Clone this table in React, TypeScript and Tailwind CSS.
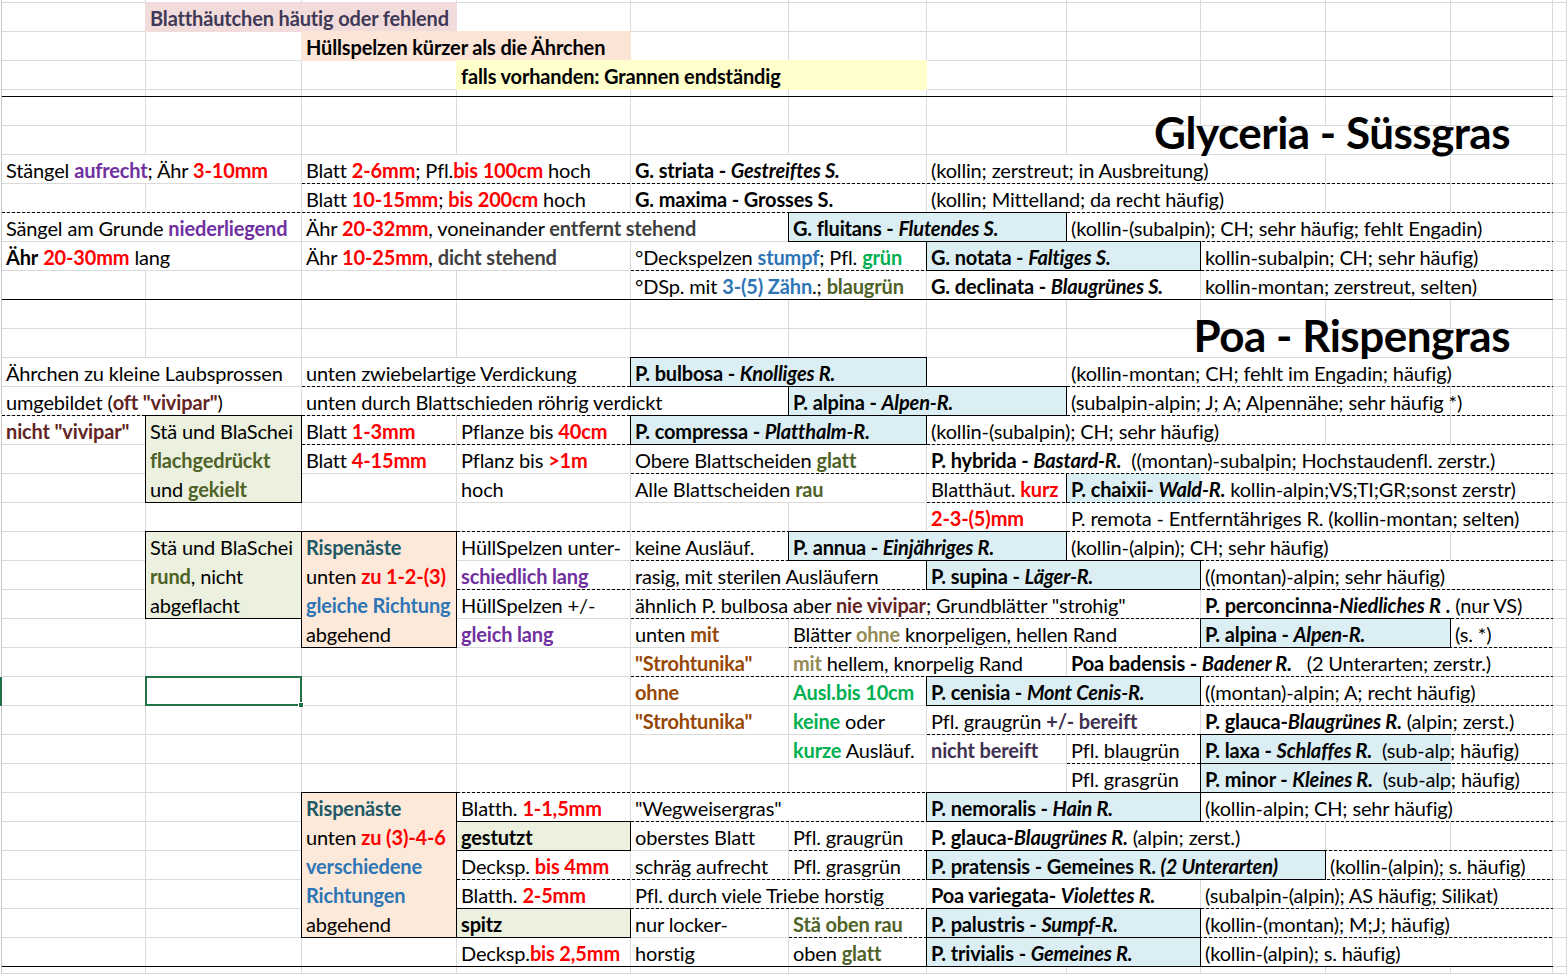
import React from "react";

type Fill = { r: number; c: number; cs?: number; rs?: number; cls: string };
type Txt = { r: number; c: number; cs?: number; t: React.ReactNode };
type Line = [number, number, number];

// column grid lines: A..K, column 1 is the 2px window edge
const A = 2, B = 3, C = 4, D = 5, E = 6, F = 7, G = 8, H = 9, I = 10, J = 11, K = 12, END = 13;

// sheet row -> grid row (a thin spacer row sits under row 2)
const gr = (r: number) => (r < 3 ? r + 2 : r + 3);
const at = (r: number, c: number, cs = 1, rs = 1) => ({
  gridRow: `${gr(r)} / span ${rs}`,
  gridColumn: `${c} / span ${cs}`,
});

const red = (s: string) => <b className="text-[#ff0000]">{s}</b>;
const pur = (s: string) => <b className="text-[#7030a0]">{s}</b>;
const mar = (s: string) => <b className="text-[#632523]">{s}</b>;
const blu = (s: string) => <b className="text-[#2e75b6]">{s}</b>;
const grn = (s: string) => <b className="text-[#00b050]">{s}</b>;
const olv = (s: string) => <b className="text-[#4f6228]">{s}</b>;
const brn = (s: string) => <b className="text-[#974706]">{s}</b>;
const tan = (s: string) => <b className="text-[#948a54]">{s}</b>;
const dpu = (s: string) => <b className="text-[#403151]">{s}</b>;
const gry = (s: string) => <b className="text-[#404040]">{s}</b>;
const tea = (s: string) => <b className="text-[#215967]">{s}</b>;
const sp = (a: string, b: string) => (
  <b>
    {a}
    <i>{b}</i>
  </b>
);

const BLUE = "bg-[#daeef3] border border-black -ml-px -mt-px";
const GREEN = "bg-[#ebf1de] border border-black -ml-px -mt-px";
const PEACH = "bg-[#fde9d9] border border-black -ml-px -mt-px";

const fills: Fill[] = [
  { r: 0, c: B, cs: 2, cls: "bg-[#f2dcdb] -ml-px -mt-px" },
  { r: 1, c: C, cs: 2, cls: "bg-[#fce4d6] -ml-px -mt-px" },
  { r: 2, c: D, cs: 3, cls: "bg-[#ffffcc] -ml-px -mt-px" },
  { r: 7, c: F, cs: 2, cls: BLUE },
  { r: 8, c: G, cs: 2, cls: BLUE },
  { r: 12, c: E, cs: 2, cls: BLUE },
  { r: 13, c: F, cs: 2, cls: BLUE },
  { r: 14, c: B, rs: 3, cls: GREEN },
  { r: 14, c: E, cs: 2, cls: BLUE },
  { r: 16, c: H, cls: "bg-[#daeef3] border-l border-black -ml-px" },
  { r: 18, c: B, rs: 3, cls: GREEN },
  { r: 18, c: C, rs: 4, cls: PEACH },
  { r: 18, c: F, cs: 2, cls: BLUE },
  { r: 19, c: G, cs: 2, cls: BLUE },
  { r: 21, c: I, cs: 2, cls: BLUE },
  { r: 23, c: G, cs: 2, cls: BLUE },
  { r: 25, c: I, cs: 2, cls: "bg-[#daeef3] border-t border-l border-black -mt-px -ml-px" },
  { r: 26, c: I, cs: 2, cls: "bg-[#daeef3] border-t border-b border-l border-black -mt-px -ml-px" },
  { r: 27, c: C, rs: 5, cls: PEACH },
  { r: 27, c: G, cs: 2, cls: BLUE },
  { r: 28, c: D, cls: GREEN },
  { r: 29, c: G, cs: 3, cls: BLUE },
  { r: 31, c: D, cls: GREEN },
  { r: 31, c: G, cs: 2, cls: BLUE },
  { r: 32, c: G, cs: 2, cls: BLUE },
];

// white areas where text runs over the next cells (hides vertical grid lines)
const masks: Txt[] = [
  { r: 4, c: H, cs: 4, t: null },
  { r: 11, c: H, cs: 4, t: null },
  { r: 16, c: I, cs: 3, t: null },
  { r: 25, c: K, cs: 1, t: null },
  { r: 26, c: K, cs: 1, t: null },
];

const texts: Txt[] = [
  { r: 0, c: B, t: <b className="text-[#3f3856]">Blatthäutchen häutig oder fehlend</b> },
  { r: 1, c: C, t: <b>Hüllspelzen kürzer als die Ährchen</b> },
  { r: 2, c: D, t: <b>falls vorhanden: Grannen endständig</b> },

  { r: 5, c: A, cs: 2, t: <>Stängel {pur("aufrecht")}; Ähr {red("3-10mm")}</> },
  { r: 5, c: C, cs: 2, t: <>Blatt {red("2-6mm")}; Pfl.{red("bis 100cm")} hoch</> },
  { r: 5, c: E, cs: 2, t: sp("G. striata - ", "Gestreiftes S.") },
  { r: 5, c: G, cs: 3, t: "(kollin; zerstreut; in Ausbreitung)" },

  { r: 6, c: C, cs: 2, t: <>Blatt {red("10-15mm")}; {red("bis 200cm")} hoch</> },
  { r: 6, c: E, cs: 2, t: <b>G. maxima - Grosses S.</b> },
  { r: 6, c: G, cs: 3, t: "(kollin; Mittelland; da recht häufig)" },

  { r: 7, c: A, cs: 2, t: <>Sängel am Grunde {pur("niederliegend")}</> },
  { r: 7, c: C, cs: 3, t: <>Ähr {red("20-32mm")}, voneinander {gry("entfernt stehend")}</> },
  { r: 7, c: F, t: sp("G. fluitans - ", "Flutendes S.") },
  { r: 7, c: H, cs: 4, t: "(kollin-(subalpin); CH; sehr häufig; fehlt Engadin)" },

  { r: 8, c: A, cs: 2, t: <><b>Ähr</b> {red("20-30mm")} lang</> },
  { r: 8, c: C, cs: 2, t: <>Ähr {red("10-25mm")}, {gry("dicht stehend")}</> },
  { r: 8, c: E, cs: 2, t: <>°Deckspelzen {blu("stumpf")}; Pfl. {grn("grün")}</> },
  { r: 8, c: G, t: sp("G. notata - ", "Faltiges S.") },
  { r: 8, c: I, cs: 3, t: "kollin-subalpin; CH; sehr häufig)" },

  { r: 9, c: E, cs: 2, t: <>°DSp. mit {blu("3-(5) Zähn")}.; {olv("blaugrün")}</> },
  { r: 9, c: G, cs: 2, t: sp("G. declinata - ", "Blaugrünes S.") },
  { r: 9, c: I, cs: 3, t: "kollin-montan; zerstreut, selten)" },

  { r: 12, c: A, cs: 2, t: "Ährchen zu kleine Laubsprossen" },
  { r: 12, c: C, cs: 2, t: "unten zwiebelartige Verdickung" },
  { r: 12, c: E, t: sp("P. bulbosa - ", "Knolliges R.") },
  { r: 12, c: H, cs: 4, t: "(kollin-montan; CH; fehlt im Engadin; häufig)" },

  { r: 13, c: A, cs: 2, t: <>umgebildet ({mar('oft "vivipar"')})</> },
  { r: 13, c: C, cs: 3, t: "unten durch Blattschieden röhrig verdickt" },
  { r: 13, c: F, t: sp("P. alpina - ", "Alpen-R.") },
  { r: 13, c: H, cs: 3, t: "(subalpin-alpin; J; A; Alpennähe; sehr häufig *)" },

  { r: 14, c: A, t: mar('nicht "vivipar"') },
  { r: 14, c: B, t: "Stä und BlaSchei" },
  { r: 14, c: C, t: <>Blatt {red("1-3mm")}</> },
  { r: 14, c: D, t: <>Pflanze bis {red("40cm")}</> },
  { r: 14, c: E, t: sp("P. compressa - ", "Platthalm-R.") },
  { r: 14, c: G, cs: 3, t: "(kollin-(subalpin); CH; sehr häufig)" },

  { r: 15, c: B, t: olv("flachgedrückt") },
  { r: 15, c: C, t: <>Blatt {red("4-15mm")}</> },
  { r: 15, c: D, t: <>Pflanz bis {red(">1m")}</> },
  { r: 15, c: E, cs: 2, t: <>Obere Blattscheiden {olv("glatt")}</> },
  { r: 15, c: G, cs: 5, t: <>{sp("P. hybrida - ", "Bastard-R.")}{"  ((montan)-subalpin; Hochstaudenfl. zerstr.)"}</> },

  { r: 16, c: B, t: <>und {olv("gekielt")}</> },
  { r: 16, c: D, t: "hoch" },
  { r: 16, c: E, cs: 2, t: <>Alle Blattscheiden {olv("rau")}</> },
  { r: 16, c: G, t: <>Blatthäut. {red("kurz")}</> },
  { r: 16, c: H, t: <>{sp("P. chaixii- ", "Wald-R.")} kollin-alpin;VS;TI;GR;sonst zerstr)</> },

  { r: 17, c: G, t: red("2-3-(5)mm") },
  { r: 17, c: H, cs: 4, t: "P. remota - Entferntähriges R. (kollin-montan; selten)" },

  { r: 18, c: B, t: "Stä und BlaSchei" },
  { r: 18, c: C, t: tea("Rispenäste") },
  { r: 18, c: D, t: "HüllSpelzen unter-" },
  { r: 18, c: E, t: "keine Ausläuf." },
  { r: 18, c: F, t: sp("P. annua - ", "Einjähriges R.") },
  { r: 18, c: H, cs: 3, t: "(kollin-(alpin); CH; sehr häufig)" },

  { r: 19, c: B, t: <>{olv("rund")}, nicht</> },
  { r: 19, c: C, t: <>unten {red("zu 1-2-(3)")}</> },
  { r: 19, c: D, t: pur("schiedlich lang") },
  { r: 19, c: E, cs: 2, t: "rasig, mit sterilen Ausläufern" },
  { r: 19, c: G, t: sp("P. supina - ", "Läger-R.") },
  { r: 19, c: I, cs: 3, t: "((montan)-alpin; sehr häufig)" },

  { r: 20, c: B, t: "abgeflacht" },
  { r: 20, c: C, t: blu("gleiche Richtung") },
  { r: 20, c: D, t: "HüllSpelzen +/-" },
  { r: 20, c: E, cs: 4, t: <>ähnlich P. bulbosa aber {mar("nie vivipar")}; Grundblätter "strohig"</> },
  { r: 20, c: I, cs: 3, t: <><b>P. perconcinna-<i>Niedliches R</i> .</b> (nur VS)</> },

  { r: 21, c: C, t: "abgehend" },
  { r: 21, c: D, t: pur("gleich lang") },
  { r: 21, c: E, t: <>unten {brn("mit")}</> },
  { r: 21, c: F, cs: 3, t: <>Blätter {tan("ohne")} knorpeligen, hellen Rand</> },
  { r: 21, c: I, t: sp("P. alpina - ", "Alpen-R.") },
  { r: 21, c: K, t: "(s. *)" },

  { r: 22, c: E, t: brn('"Strohtunika"') },
  { r: 22, c: F, cs: 2, t: <>{tan("mit")} hellem, knorpelig Rand</> },
  { r: 22, c: H, cs: 4, t: <>{sp("Poa badensis - ", "Badener R.")}{"   (2 Unterarten; zerstr.)"}</> },

  { r: 23, c: E, t: brn("ohne") },
  { r: 23, c: F, t: grn("Ausl.bis 10cm") },
  { r: 23, c: G, t: sp("P. cenisia - ", "Mont Cenis-R.") },
  { r: 23, c: I, cs: 3, t: "((montan)-alpin; A; recht häufig)" },

  { r: 24, c: E, t: brn('"Strohtunika"') },
  { r: 24, c: F, t: <>{grn("keine")} oder</> },
  { r: 24, c: G, cs: 2, t: <>Pfl. graugrün {dpu("+/- bereift")}</> },
  { r: 24, c: I, cs: 3, t: <>{sp("P. glauca-", "Blaugrünes R.")} (alpin; zerst.)</> },

  { r: 25, c: F, t: <>{grn("kurze")} Ausläuf.</> },
  { r: 25, c: G, t: dpu("nicht bereift") },
  { r: 25, c: H, t: "Pfl. blaugrün" },
  { r: 25, c: I, t: <>{sp("P. laxa - ", "Schlaffes R.")}{"  (sub-alp; häufig)"}</> },

  { r: 26, c: H, t: "Pfl. grasgrün" },
  { r: 26, c: I, t: <>{sp("P. minor - ", "Kleines R.")}{"  (sub-alp; häufig)"}</> },

  { r: 27, c: C, t: tea("Rispenäste") },
  { r: 27, c: D, t: <>Blatth. {red("1-1,5mm")}</> },
  { r: 27, c: E, cs: 2, t: '"Wegweisergras"' },
  { r: 27, c: G, t: sp("P. nemoralis - ", "Hain R.") },
  { r: 27, c: I, cs: 3, t: "(kollin-alpin; CH; sehr häufig)" },

  { r: 28, c: C, t: <>unten {red("zu (3)-4-6")}</> },
  { r: 28, c: D, t: <b>gestutzt</b> },
  { r: 28, c: E, t: "oberstes Blatt" },
  { r: 28, c: F, t: "Pfl. graugrün" },
  { r: 28, c: G, cs: 3, t: <>{sp("P. glauca-", "Blaugrünes R.")} (alpin; zerst.)</> },

  { r: 29, c: C, t: blu("verschiedene") },
  { r: 29, c: D, t: <>Decksp. {red("bis 4mm")}</> },
  { r: 29, c: E, t: "schräg aufrecht" },
  { r: 29, c: F, t: "Pfl. grasgrün" },
  { r: 29, c: G, t: <b>P. pratensis - Gemeines R. <i>(2 Unterarten)</i></b> },
  { r: 29, c: J, cs: 2, t: "(kollin-(alpin); s. häufig)" },

  { r: 30, c: C, t: blu("Richtungen") },
  { r: 30, c: D, t: <>Blatth. {red("2-5mm")}</> },
  { r: 30, c: E, cs: 2, t: "Pfl. durch viele Triebe horstig" },
  { r: 30, c: G, cs: 2, t: sp("Poa variegata- ", "Violettes R.") },
  { r: 30, c: I, cs: 3, t: "(subalpin-(alpin); AS häufig; Silikat)" },

  { r: 31, c: C, t: "abgehend" },
  { r: 31, c: D, t: <b>spitz</b> },
  { r: 31, c: E, t: "nur locker-" },
  { r: 31, c: F, t: olv("Stä oben rau") },
  { r: 31, c: G, t: sp("P. palustris - ", "Sumpf-R.") },
  { r: 31, c: I, cs: 3, t: "(kollin-(montan); M;J; häufig)" },

  { r: 32, c: D, t: <>Decksp.{red("bis 2,5mm")}</> },
  { r: 32, c: E, t: "horstig" },
  { r: 32, c: F, t: <>oben {olv("glatt")}</> },
  { r: 32, c: G, t: sp("P. trivialis - ", "Gemeines R.") },
  { r: 32, c: I, cs: 3, t: "(kollin-(alpin); s. häufig)" },
];

// dashed hair borders under a row: [row, from col, to col (exclusive)]
const dashed: Line[] = [
  [5, C, END], [6, A, END], [7, H, END], [8, E, END],
  [12, C, END], [13, A, END], [14, C, END], [15, E, END], [16, G, END],
  [17, D, END], [18, E, END], [19, D, END], [20, E, END], [21, F, END],
  [22, E, END], [23, I, END], [24, G, END], [25, H, END], [26, D, END],
  [27, E, END], [28, F, END], [29, D, END], [30, E, END], [31, F, END],
];
const solid: Line[] = [[9, A, END], [32, A, END]];

const GridBackground = () => (
  <div className="[grid-area:1/1] grid grid-cols-[2px_144px_156px_155px_174px_158px_138px_140px_134px_125px_125px_102px_14px] grid-rows-[3px_repeat(3,29px)_7px_repeat(30,29px)_7px]">
    {Array.from({ length: 36 }).map((_, ri) => (
      <React.Fragment key={ri}>
        <div className="border-r border-[#c6c6c6]" />
        {Array.from({ length: 12 }).map((_, ci) => (
          <div key={ci} className="border-r border-b border-[#dadada]" />
        ))}
      </React.Fragment>
    ))}
  </div>
);

export default function App() {
  return (
    <div className="grid w-[1567px] h-[975px] overflow-hidden bg-white text-black [font-family:Lato,'Noto_Sans',sans-serif] text-[20px] tracking-[-0.15px]">
      <GridBackground />
      <div className="[grid-area:1/1] grid grid-cols-[2px_144px_156px_155px_174px_158px_138px_140px_134px_125px_125px_102px_14px] grid-rows-[3px_repeat(3,29px)_7px_repeat(30,29px)_7px]">
        {/* overflow masks */}
        {texts
          .filter((t) => (t.cs ?? 1) > 1)
          .map((t, i) => (
            <div key={`m${i}`} style={at(t.r, t.c, t.cs)} className="bg-white mb-px mr-px" />
          ))}
        {masks.map((m, i) => (
          <div key={`mm${i}`} style={at(m.r, m.c, m.cs)} className="bg-white mb-px mr-px" />
        ))}

        {/* fills and boxes */}
        {fills.map((f, i) => (
          <div key={`f${i}`} style={at(f.r, f.c, f.cs, f.rs)} className={f.cls} />
        ))}

        {/* black line under the header rows */}
        <div style={{ gridRow: "5", gridColumn: `${A} / ${END}` }} className="self-end h-px bg-black" />
        {solid.map(([r, a, b], i) => (
          <div key={`s${i}`} style={{ gridRow: `${gr(r)}`, gridColumn: `${a} / ${b}` }} className="self-end h-px bg-black" />
        ))}
        {dashed.map(([r, a, b], i) => (
          <div
            key={`d${i}`}
            style={{ gridRow: `${gr(r)}`, gridColumn: `${a} / ${b}` }}
            className="self-end h-px bg-[image:repeating-linear-gradient(90deg,#000_0_3px,transparent_3px_5px)]"
          />
        ))}

        {/* cell text */}
        {texts.map((t, i) => (
          <div key={`t${i}`} style={at(t.r, t.c)} className="flex items-end whitespace-pre pl-1 pb-[2px] leading-[24px]">
            <span>{t.t}</span>
          </div>
        ))}

        {/* titles */}
        <div style={at(4, H, 4)} className="flex items-end justify-end pr-[43px] pb-[1px]">
          <span className="text-[44px] leading-[44px] font-bold tracking-[-0.5px]">Glyceria - Süssgras</span>
        </div>
        <div style={at(11, H, 4)} className="flex items-end justify-end pr-[43px] pb-[1px]">
          <span className="text-[44px] leading-[44px] font-bold tracking-[-0.5px]">Poa - Rispengras</span>
        </div>

        {/* selected cell + row header mark */}
        <div style={at(23, B)} className="relative border-2 border-[#217346] -ml-px -mt-px">
          <div className="absolute -right-[4px] -bottom-[4px] w-[6px] h-[6px] bg-[#217346] border border-white" />
        </div>
        <div style={at(23, 1)} className="bg-[#217346]" />
      </div>
    </div>
  );
}
